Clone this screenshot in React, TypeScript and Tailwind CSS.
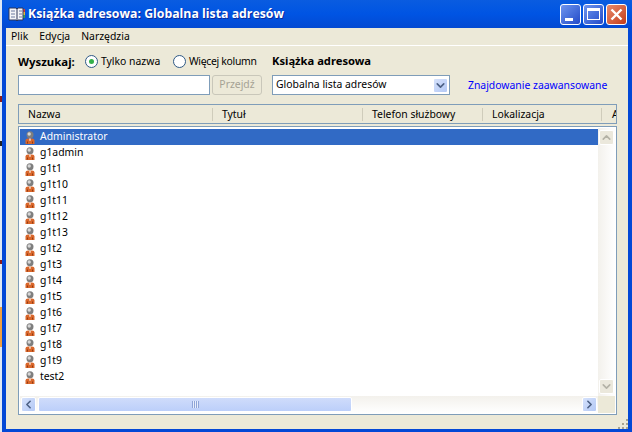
import { ChevronDown, ChevronLeft, ChevronRight, ChevronUp } from "lucide-react";

const names = ["g1admin", "g1t1", "g1t10", "g1t11", "g1t12", "g1t13", "g1t2", "g1t3", "g1t4", "g1t5", "g1t6", "g1t7", "g1t8", "g1t9", "test2"];

function PersonIcon() {
  return (
    <svg width="10" height="13" viewBox="0 0 10 13" className="shrink-0">
      <path d="M0.5 13 V9.5 Q0.5 7.5 3 7.5 H7 Q9.5 7.5 9.5 9.5 V13 Z" fill="#d9662a" />
      <path d="M4 7.5 H6 L5.5 10 H4.5 Z" fill="#f7dcc8" />
      <path d="M2.5 12.5 V10.5 M7.5 12.5 V10.5" stroke="#8f3d14" />
      <circle cx="5" cy="3.8" r="3.5" fill="#7e7e7e" />
      <circle cx="4.2" cy="3" r="1.7" fill="#d6d6d6" />
    </svg>
  );
}

function BookIcon() {
  return (
    <svg width="18" height="16" viewBox="0 0 18 16" className="shrink-0">
      <path d="M1 2 H8 L9 3 L10 2 H15 V14 H10 L9 15 L8 14 H1 Z" fill="#f4f4f8" stroke="#2a3558" />
      <path d="M9 3 V15" stroke="#2a3558" />
      <path d="M3 5 H7 M3 8 H7 M3 11 H7 M11 5 H14 M11 8 H14 M11 11 H14" stroke="#6d7aa0" />
      <path d="M15.5 3 H17 V6 H15.5 Z" fill="#d23c2c" />
      <path d="M15.5 6 H17 V9 H15.5 Z" fill="#e8b830" />
      <path d="M15.5 9 H17 V12 H15.5 Z" fill="#3ea04a" />
    </svg>
  );
}

function SizeGrip() {
  return (
    <svg width="11" height="11" viewBox="0 0 11 11" className="shrink-0">
      <path d="M9 1 h2 v2 h-2 Z M5 5 h2 v2 h-2 Z M9 5 h2 v2 h-2 Z M1 9 h2 v2 h-2 Z M5 9 h2 v2 h-2 Z M9 9 h2 v2 h-2 Z" fill="#a8a490" />
    </svg>
  );
}

function ArrowBox({ children, disabled }: { children: React.ReactNode; disabled?: boolean }) {
  return (
    <div
      className={
        disabled
          ? "flex h-[15px] w-[15px] shrink-0 items-center justify-center rounded-[2px] border border-white bg-[#ebe8dc] text-[#b4b2a6]"
          : "flex h-[15px] w-[15px] shrink-0 items-center justify-center rounded-[2px] border border-white bg-gradient-to-br from-[#d5e1fb] to-[#b4c9f5] text-[#4d6185]"
      }
    >
      {children}
    </div>
  );
}

export default function App() {
  return (
    <div className="flex h-[432px] w-[632px] overflow-hidden bg-[#e6ecf5] font-['Noto_Sans',sans-serif] text-[10.4px] text-black">
      {/* Desktop showing behind the window */}
      <div className="w-[2px] shrink-0 bg-[linear-gradient(180deg,#dfe8f4_0,#dfe8f4_96px,#8c1c1c_96px,#8c1c1c_102px,#dfe8f4_102px,#dfe8f4_141px,#222_141px,#222_146px,#dfe8f4_146px,#dfe8f4_260px,#8c1c1c_260px,#8c1c1c_264px,#dfe8f4_264px,#dfe8f4_307px,#f0a040_307px,#f0a040_347px,#dfe8f4_347px)]" />
      <div className="flex min-w-0 flex-1 flex-col">
        {/* Title bar */}
        <div className="flex h-[28px] shrink-0 items-center bg-gradient-to-b from-[#0a5ce0] via-[#0054e3] to-[#0349d2] pr-[5px] pl-[6px]">
          <BookIcon />
          <span className="ml-[2px] font-['Open_Sans',sans-serif] text-[12.3px] font-bold text-white [text-shadow:1px_1px_0_#0b2a9c]">
            Książka adresowa: Globalna lista adresów
          </span>
          <div className="ml-auto flex gap-[2px]">
            <div className="relative h-[21px] w-[21px] rounded-[3px] border border-white bg-gradient-to-br from-[#6f94ee] to-[#2449c8]">
              <div className="absolute bottom-[3px] left-[4px] h-[3px] w-[8px] bg-white" />
            </div>
            <div className="flex h-[21px] w-[21px] items-center justify-center rounded-[3px] border border-white bg-gradient-to-br from-[#6f94ee] to-[#2449c8]">
              <div className="h-[12px] w-[13px] border border-t-[3px] border-white" />
            </div>
            <div className="flex h-[21px] w-[21px] items-center justify-center rounded-[3px] border border-white bg-gradient-to-br from-[#e88a6c] to-[#c33a14]">
              <svg width="13" height="13" viewBox="0 0 13 13">
                <path d="M1.5 1.5 L11.5 11.5 M11.5 1.5 L1.5 11.5" stroke="#fff" strokeWidth="2.4" />
              </svg>
            </div>
          </div>
        </div>

        {/* Window body */}
        <div className="flex min-h-0 flex-1 flex-col border-x-4 border-b-[3px] border-[#0348d6] bg-[#ece9d8]">
          {/* Menu */}
          <div className="flex h-[18px] shrink-0 items-center gap-[11px] border-b border-white pt-[1px] pl-[5px]">
            <span>Plik</span>
            <span>Edycja</span>
            <span>Narzędzia</span>
          </div>

          <div className="flex min-h-0 flex-1 flex-col pt-[8px] pr-[11px] pl-[12px]">
            {/* Search */}
            <div className="flex h-[15px] shrink-0 items-center">
              <span className="w-[67px] text-[11.4px] font-bold">Wyszukaj:</span>
              <div className="flex h-[13px] w-[13px] items-center justify-center rounded-full border border-[#2f5a86] bg-white">
                <div className="h-[5px] w-[5px] rounded-full bg-[#34b04a]" />
              </div>
              <span className="ml-[3px] w-[72px]">Tylko nazwa</span>
              <div className="h-[13px] w-[13px] rounded-full border border-[#2f5a86] bg-white" />
              <span className="ml-[3px] w-[83px] tracking-[-0.3px]">Więcej kolumn</span>
              <span className="text-[11.2px] font-bold">Książka adresowa</span>
            </div>
            <div className="mt-[6px] flex h-[20px] shrink-0 items-stretch">
              <div className="w-[192px] border border-[#7f9db9] bg-white" />
              <div className="ml-[2px] flex w-[50px] items-center justify-center rounded-[3px] border border-[#c9c7ba] text-[#a5a294]">
                Przejdź
              </div>
              <div className="ml-[10px] flex w-[178px] items-center justify-between border border-[#7f9db9] bg-white pr-[1px] pl-[3px]">
                <span>Globalna lista adresów</span>
                <ArrowBox>
                  <ChevronDown size={13} strokeWidth={3} />
                </ArrowBox>
              </div>
              <span className="ml-[18px] self-center pt-[1px] whitespace-nowrap text-[#0000ff]">Znajdowanie zaawansowane</span>
            </div>

            {/* Column headers */}
            <div className="mt-[9px] flex h-[20px] shrink-0 items-center overflow-hidden border border-[#7f9db9]">
              <div className="w-[194px] shrink-0 border-r border-[#cfccbb] pl-[9px] leading-[13px]">Nazwa</div>
              <div className="w-[150px] shrink-0 border-r border-[#cfccbb] pl-[9px] leading-[13px]">Tytuł</div>
              <div className="w-[120px] shrink-0 border-r border-[#cfccbb] pl-[9px] leading-[13px]">Telefon służbowy</div>
              <div className="w-[119px] shrink-0 border-r border-[#cfccbb] pl-[9px] leading-[13px]">Lokalizacja</div>
              <div className="shrink-0 pl-[10px] leading-[13px]">Adres</div>
            </div>

            {/* List */}
            <div className="mt-[2px] flex h-[289px] shrink-0 flex-col border border-[#7f9db9] bg-white p-[1px]">
              <div className="flex min-h-0 flex-1">
                <div className="min-w-0 flex-1 pt-[1px]">
                  <div className="flex h-[16px] items-center gap-[5px] bg-[#316ac5] pl-[5px] text-white">
                    <PersonIcon />
                    <span>Administrator</span>
                  </div>
                  {names.map((n) => (
                    <div key={n} className="flex h-[16px] items-center gap-[5px] pl-[5px]">
                      <PersonIcon />
                      <span>{n}</span>
                    </div>
                  ))}
                </div>
                <div className="flex w-[17px] shrink-0 flex-col justify-between bg-gradient-to-r from-[#f3f1ec] to-white py-[2px] pl-[1px]">
                  <ArrowBox disabled>
                    <ChevronUp size={13} strokeWidth={3} />
                  </ArrowBox>
                  <ArrowBox disabled>
                    <ChevronDown size={13} strokeWidth={3} />
                  </ArrowBox>
                </div>
              </div>
              <div className="flex h-[17px] shrink-0">
                <div className="flex flex-1 items-center bg-gradient-to-b from-[#f3f1ec] to-white pr-[1px] pl-[1px]">
                  <ArrowBox>
                    <ChevronLeft size={13} strokeWidth={3} />
                  </ArrowBox>
                  <div className="ml-[2px] flex h-[15px] w-[314px] items-center justify-center rounded-[2px] border border-white bg-gradient-to-b from-[#cfdcfb] to-[#bccffa]">
                    <div className="h-[7px] w-[7px] bg-[repeating-linear-gradient(90deg,#8ea5d8_0,#8ea5d8_1px,#e8eefc_1px,#e8eefc_2px)]" />
                  </div>
                  <div className="flex-1" />
                  <ArrowBox>
                    <ChevronRight size={13} strokeWidth={3} />
                  </ArrowBox>
                </div>
                <div className="w-[17px] bg-[#ece9d8]" />
              </div>
            </div>

            {/* Resize grip */}
            <div className="mr-[-11px] flex h-[14px] shrink-0 items-end justify-end">
              <SizeGrip />
            </div>
          </div>
        </div>
      </div>
    </div>
  );
}
